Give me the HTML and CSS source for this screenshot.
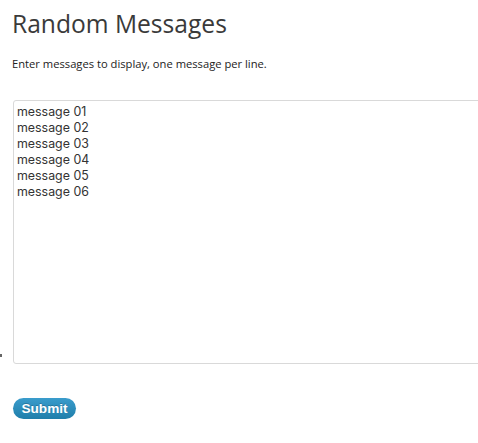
FILE: index.html
```html
<!DOCTYPE html>
<html>
<head>
<meta charset="utf-8">
<link rel="stylesheet" href="styles.css">
</head>
<body>
<div class="page">
  <h1 class="title">Random Messages</h1>
  <p class="desc">Enter messages to display, one message per line.</p>
  <div class="field">
    <span class="mark"></span>
    <textarea class="messages">message 01
message 02
message 03
message 04
message 05
message 06</textarea>
  </div>
  <button class="submit">Submit</button>
</div>
</body>
</html>
```
FILE: styles.css
```css
html, body {
  margin: 0;
  padding: 0;
  background: #fff;
}
.page {
  padding: 10px 0 0 12px;
  font-family: "Open Sans", "Liberation Sans", sans-serif;
  color: #333;
}
.title {
  margin: 0;
  font-size: 24.6px;
  font-weight: 400;
  line-height: 28px;
  color: #3a3a3a;
}
.desc {
  margin: 18px 0 0 0;
  font-size: 11.2px;
  line-height: 16px;
  color: #222;
}
.field {
  position: relative;
  margin-top: 28px;
}
.mark {
  position: absolute;
  left: -12px;
  top: 254px;
  width: 2px;
  height: 3px;
  background: #666;
}
.messages {
  display: block;
  box-sizing: border-box;
  margin: 0 0 0 1px;
  width: 470px;
  height: 264px;
  padding: 3px 3px;
  border: 1px solid #d9d9d9;
  border-radius: 3px;
  font-family: "Inter", "Liberation Sans", sans-serif;
  font-size: 12.4px;
  line-height: 16px;
  color: #333;
  resize: none;
  outline: none;
}
.submit {
  display: block;
  margin: 34px 0 0 1px;
  width: 63px;
  height: 21px;
  padding: 0;
  border: 0;
  border-radius: 11px;
  background: linear-gradient(#3a9ccc, #1f7eaa);
  color: #fff;
  font-family: "Liberation Sans", Arial, sans-serif;
  font-weight: 700;
  font-size: 13.6px;
  line-height: 21px;
  text-shadow: 0 -1px 0 rgba(0,0,0,0.2);
}
```
